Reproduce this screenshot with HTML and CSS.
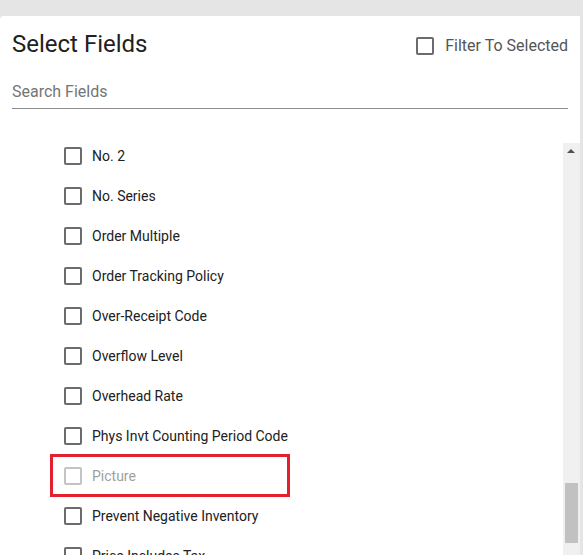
FILE: index.html
```html
<!DOCTYPE html>
<html lang="en">

<head>
  <meta charset="UTF-8">
  <meta name="viewport" content="width=device-width, initial-scale=1.0">
  <title>Select Fields</title>
  <link rel="stylesheet" href="styles.css">
</head>

<body>
  <div class="card">
    <div class="header">
      <h1>Select Fields</h1>
      <label class="filter">
        <span class="box"></span>
        Filter To Selected
      </label>
    </div>

    <div class="search">
      <input type="text" placeholder="Search Fields">
    </div>

    <div class="fields">
      <div class="list">
        <div class="inner">
          <label class="row"><span class="box"></span>No. 2</label>
          <label class="row"><span class="box"></span>No. Series</label>
          <label class="row"><span class="box"></span>Order Multiple</label>
          <label class="row"><span class="box"></span>Order Tracking Policy</label>
          <label class="row"><span class="box"></span>Over-Receipt Code</label>
          <label class="row"><span class="box"></span>Overflow Level</label>
          <label class="row"><span class="box"></span>Overhead Rate</label>
          <label class="row"><span class="box"></span>Phys Invt Counting Period Code</label>
          <label class="row disabled"><span class="box"></span>Picture<span class="mark"></span></label>
          <label class="row"><span class="box"></span>Prevent Negative Inventory</label>
          <label class="row"><span class="box"></span>Price Includes Tax</label>
        </div>
      </div>
      <div class="scrollbar">
        <span class="arrow"></span>
        <span class="thumb"></span>
      </div>
    </div>
  </div>
</body>

</html>
```

FILE: styles.css
```css
body {
  margin: 0;
  padding: 0;
  background-color: #e5e5e5;
  font-family: Roboto, "Liberation Sans", sans-serif;
  color: #212121;
  overflow: hidden;
}

.card {
  margin-top: 16px;
  width: 580px;
  height: 539px;
  background-color: #fff;
  border-top-left-radius: 4px;
  display: flex;
  flex-direction: column;
}

.header {
  display: flex;
  justify-content: space-between;
  align-items: flex-start;
  padding: 14px 12px 0 12px;
}

h1 {
  margin: 0;
  font-size: 24px;
  font-weight: normal;
  line-height: 28px;
}

.filter {
  display: flex;
  align-items: center;
  gap: 11px;
  margin-top: 6px;
  font-size: 16px;
  color: #555;
}

.box {
  display: inline-block;
  box-sizing: border-box;
  width: 18px;
  height: 18px;
  border: 2px solid #6b6b6b;
  border-radius: 2px;
  flex-shrink: 0;
}

.search {
  padding: 0 12px;
  margin-top: 24px;
}

.search input {
  display: block;
  width: 100%;
  box-sizing: border-box;
  border: none;
  border-bottom: 1px solid #8c8c8c;
  padding: 0 0 7px 0;
  font-family: inherit;
  font-size: 16px;
  line-height: 19px;
  outline: none;
}

.search input::placeholder {
  color: #757575;
}

.fields {
  display: flex;
  margin-top: 34px;
  flex: 1;
  min-height: 0;
}

.list {
  flex: 1;
  overflow: hidden;
}

.inner {
  margin-top: -7px;
}

.row {
  position: relative;
  display: flex;
  align-items: center;
  gap: 10px;
  height: 40px;
  padding-left: 64px;
  font-size: 14px;
}

.row.disabled {
  color: #a0a0a0;
}

.row.disabled .box {
  border-color: #c4c4c4;
}

/* red highlight round the Picture row */
.mark {
  position: absolute;
  left: 50px;
  top: -2px;
  width: 240px;
  height: 43px;
  box-sizing: border-box;
  border: 3px solid #e3202e;
}

.scrollbar {
  position: relative;
  width: 17px;
  background-color: #f0f0f0;
}

.arrow {
  position: absolute;
  left: 4px;
  top: 6px;
  width: 0;
  height: 0;
  border-left: 4px solid transparent;
  border-right: 4px solid transparent;
  border-bottom: 4px solid #505050;
}

.thumb {
  position: absolute;
  left: 2px;
  top: 340px;
  width: 13px;
  height: 60px;
  background-color: #c1c1c1;
}
```
